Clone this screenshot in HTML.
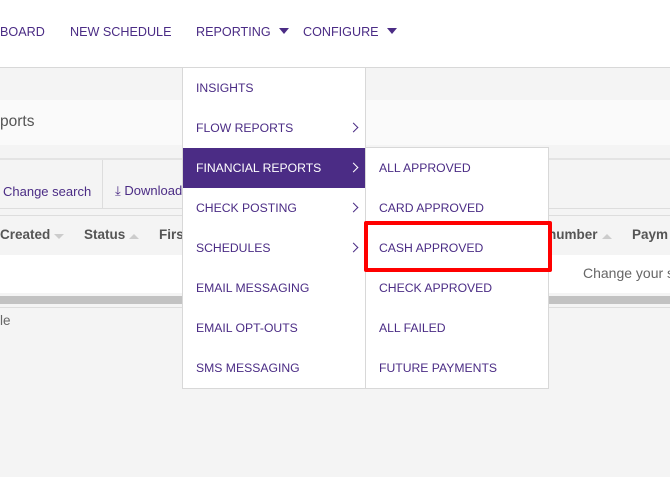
<!DOCTYPE html>
<html><head><style>
html,body{margin:0;width:670px;height:477px;overflow:hidden}
#w{position:relative;width:670px;height:477px;overflow:hidden;background:#f4f4f4;font-family:"Liberation Sans",sans-serif}
.a{position:absolute;white-space:nowrap}
.nav{color:#4b2c85;font-size:12.6px;top:25px}
.tri{display:inline-block;width:0;height:0;border-left:5px solid transparent;border-right:5px solid transparent;border-top:6px solid #4b2c85;margin-left:8px;vertical-align:2px}
.menu{background:#fff;border:1px solid #d8d8d8}
.it{position:absolute;left:0;right:0;height:40px;line-height:40px;padding-left:13px;color:#4b2c85;font-size:12.2px;white-space:nowrap}
.it.on{background:#4b2c85;color:#fff}
.chev{position:absolute;right:8px;top:16px;width:6px;height:6px;border-right:1.6px solid #4b2c85;border-top:1.6px solid #4b2c85;transform:rotate(45deg)}
.on .chev{border-color:#fff}
.g{color:#555;font-size:13.5px}
.srt{display:inline-block;width:0;height:0;border-left:5px solid transparent;border-right:5px solid transparent;margin-left:4px}
</style></head><body><div id="w">
<div class="a" style="left:0;top:0;width:670px;height:67px;background:#fff;border-bottom:1px solid #d8d8d8"></div>
<div class="a nav" style="left:0">BOARD</div>
<div class="a nav" style="left:70px">NEW SCHEDULE</div>
<div class="a nav" style="left:196px">REPORTING<span class="tri"></span></div>
<div class="a nav" style="left:303px">CONFIGURE<span class="tri"></span></div>
<div class="a" style="left:0;top:100px;width:670px;height:45px;background:#fafafa"></div>
<div class="a g" style="left:0;top:113px;font-size:15.5px">ports</div>
<div class="a" style="left:0;top:158px;width:670px;height:2px;background:#e4e4e4"></div>
<div class="a" style="left:102px;top:160px;width:1px;height:48px;background:#ddd"></div>
<div class="a" style="left:0;top:208px;width:670px;height:1px;background:#ddd"></div>
<div class="a" style="left:3px;top:184px;color:#4b2c85;font-size:13px">Change search</div>
<div class="a" style="left:115px;top:183px;color:#4b2c85;font-size:13px">&#x2913; Download</div>
<div class="a" style="left:0;top:215px;width:670px;height:1px;background:#ddd"></div>
<div class="a" style="left:0;top:255px;width:670px;height:38px;background:#fff"></div>
<div class="a g" style="left:0;top:227px;font-weight:bold">Created<span class="srt" style="border-top:5px solid #ccc"></span></div>
<div class="a g" style="left:84px;top:227px;font-weight:bold">Status<span class="srt" style="border-bottom:5px solid #ccc"></span></div>
<div class="a g" style="left:159px;top:227px;font-weight:bold">First</div>
<div class="a g" style="left:548px;top:227px;font-weight:bold">number<span class="srt" style="border-bottom:5px solid #ccc"></span></div>
<div class="a g" style="left:632px;top:227px;font-weight:bold">Paym</div>
<div class="a g" style="left:583px;top:265px;color:#666;font-size:14px">Change your s</div>
<div class="a" style="left:0;top:296px;width:670px;height:8px;background:#c2c2c2"></div>
<div class="a" style="left:0;top:307px;width:670px;height:1px;background:#ddd"></div>
<div class="a g" style="left:0;top:313px;color:#666">le</div>
<div class="a menu" style="left:182px;top:67px;width:182px;height:320px">
<div class="it" style="top:0">INSIGHTS</div>
<div class="it" style="top:40px">FLOW REPORTS<i class="chev"></i></div>
<div class="it on" style="top:80px">FINANCIAL REPORTS<i class="chev"></i></div>
<div class="it" style="top:120px">CHECK POSTING<i class="chev"></i></div>
<div class="it" style="top:160px">SCHEDULES<i class="chev"></i></div>
<div class="it" style="top:200px">EMAIL MESSAGING</div>
<div class="it" style="top:240px">EMAIL OPT-OUTS</div>
<div class="it" style="top:280px">SMS MESSAGING</div>
</div>
<div class="a menu" style="left:365px;top:147px;width:182px;height:240px">
<div class="it" style="top:0">ALL APPROVED</div>
<div class="it" style="top:40px">CARD APPROVED</div>
<div class="it" style="top:80px">CASH APPROVED</div>
<div class="it" style="top:120px">CHECK APPROVED</div>
<div class="it" style="top:160px">ALL FAILED</div>
<div class="it" style="top:200px">FUTURE PAYMENTS</div>
</div>
<div class="a" style="left:364px;top:221px;width:180px;height:43px;border:4px solid #f00;border-radius:2px"></div>
</div></body></html>
